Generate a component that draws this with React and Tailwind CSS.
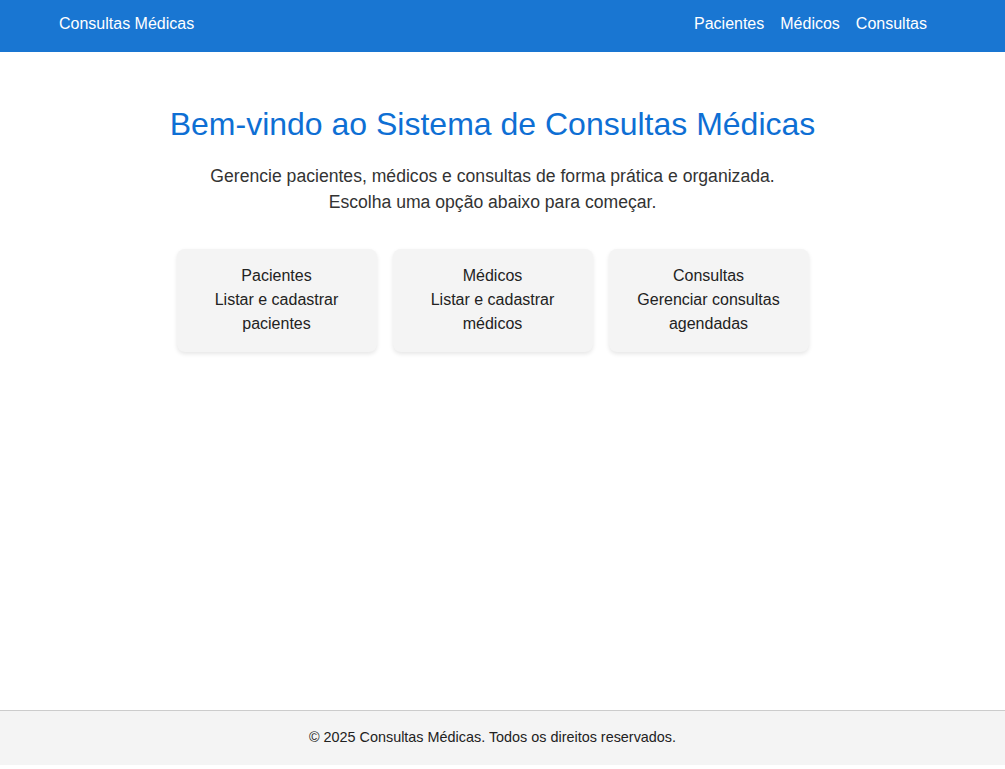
export default function App() {
  const cards = [
    { title: 'Pacientes', desc: 'Listar e cadastrar pacientes' },
    { title: 'Médicos', desc: 'Listar e cadastrar médicos' },
    { title: 'Consultas', desc: 'Gerenciar consultas agendadas' },
  ]

  return (
    <div className="flex flex-col h-[765px] bg-white font-['Liberation_Sans',Arial,sans-serif]">
      <header className="h-[52px] bg-[#1976d2] text-white flex items-center justify-between pl-[59px] pr-[78px] pb-[4px] flex-shrink-0">
        <span className="text-[16px]">Consultas Médicas</span>
        <nav className="flex gap-4 text-[16px]">
          <a>Pacientes</a>
          <a>Médicos</a>
          <a>Consultas</a>
        </nav>
      </header>

      <main className="flex-1 flex flex-col items-center pt-[54px] pr-[20px]">
        <h1 className="text-[32px] leading-[37px] text-[#0e6fd4]">
          Bem-vindo ao Sistema de Consultas Médicas
        </h1>
        <p className="mt-[20px] text-[17.6px] leading-[26px] text-[#333] text-center">
          Gerencie pacientes, médicos e consultas de forma prática e organizada.
          <br />
          Escolha uma opção abaixo para começar.
        </p>
        <div className="mt-[34px] flex gap-4">
          {cards.map(c => (
            <div
              key={c.title}
              className="w-[200px] bg-[#f4f4f4] rounded-lg pt-[15px] pb-[16px] px-[15px] text-center text-[16px] leading-[24px] text-[#222] shadow-[0_2px_4px_rgba(0,0,0,0.1)]"
            >
              <div>{c.title}</div>
              <div>{c.desc}</div>
            </div>
          ))}
        </div>
      </main>

      <footer className="h-[55px] flex-shrink-0 bg-[#f4f4f4] border-t border-[#ccc] flex items-center justify-center pr-[20px] pb-[1px]">
        <span className="text-[14.4px] text-[#222]">© 2025 Consultas Médicas. Todos os direitos reservados.</span>
      </footer>
    </div>
  )
}
